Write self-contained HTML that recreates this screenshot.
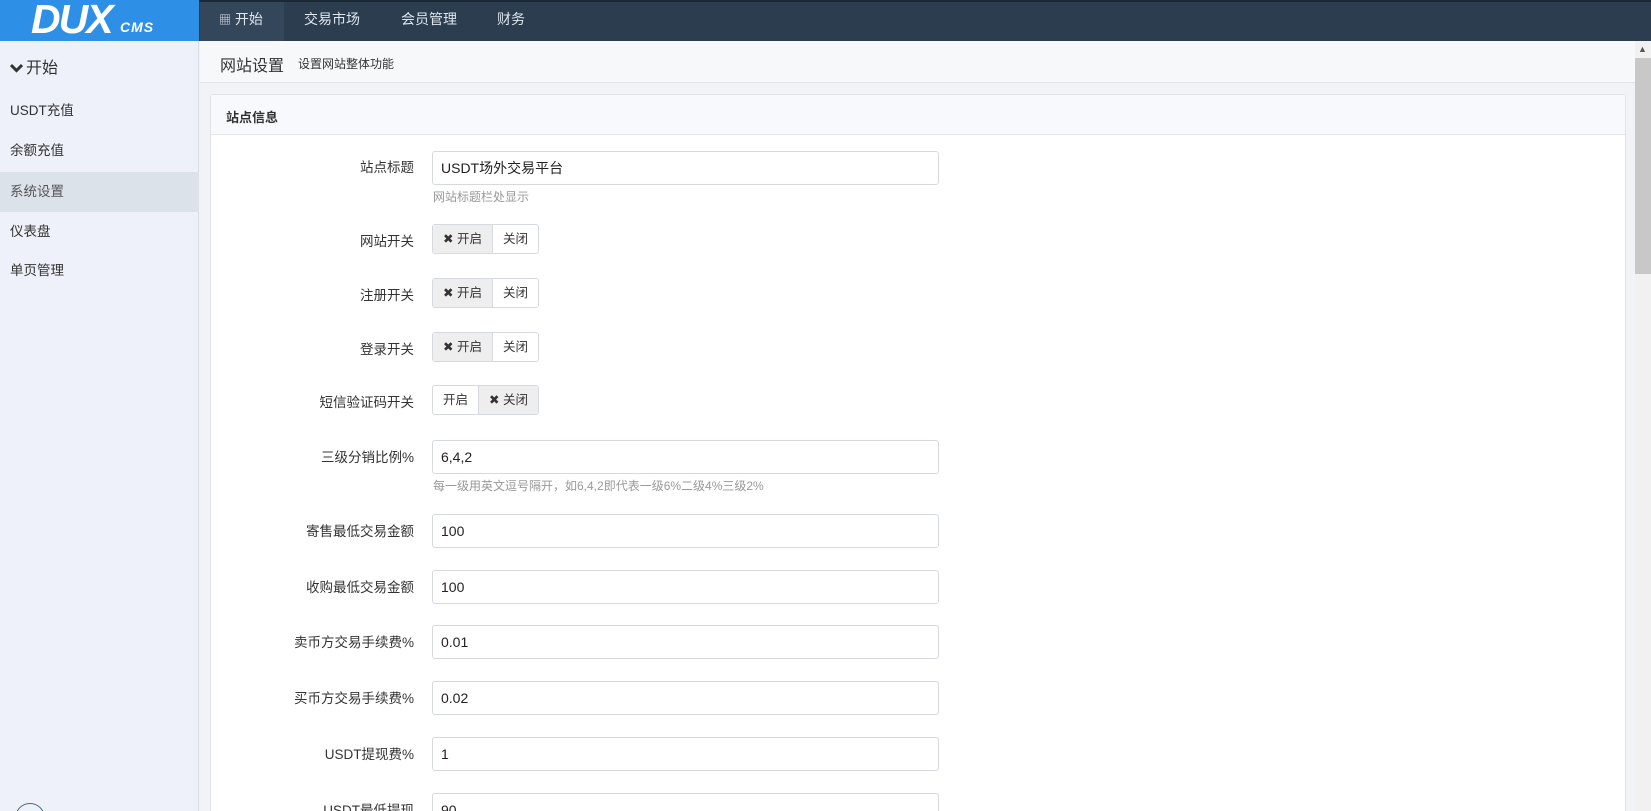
<!DOCTYPE html>
<html><head><meta charset="utf-8"><style>
*{margin:0;padding:0;box-sizing:border-box}
html,body{width:1651px;height:811px;overflow:hidden}
body{position:relative;background:#f1f3f6;font-family:"Liberation Sans","Noto Sans CJK SC",sans-serif;color:#333;font-size:13px}
.a{position:absolute}
.top{left:0;top:0;width:1651px;height:41px;background:#2c3d50;border-top:2px solid #1b2835}
.logo{left:0;top:0;width:199px;height:41px;background:#2e8fe6;overflow:hidden}
.nav{top:0;height:41px;line-height:39px;color:#dfe6ee;font-size:14px}
.side{left:0;top:41px;width:199px;height:770px;background:#eef1f9;border-right:1px solid #d8dce4;overflow:hidden}
.si{left:0;width:199px;height:40px;line-height:40px;padding-left:10px;font-size:13.5px;color:#333}
.ph{left:200px;top:41px;width:1435px;height:42px;background:#f7f8fa;border-bottom:1px solid #e2e5ea}
.card{left:210px;top:94px;width:1416px;height:740px;background:#fff;border:1px solid #dfe2e7;border-radius:3px}
.ch{left:0;top:0;width:100%;height:40px;background:#f8f9fc;border-bottom:1px solid #e3e6eb}
.lb{width:200px;text-align:right;left:214px;font-size:13.5px;color:#333}
.in{left:432px;width:507px;height:34px;border:1px solid #d6d9de;border-radius:3px;padding-left:8px;line-height:32px;font-size:14px;color:#222;background:#fff}
.hp{left:433px;font-size:12px;color:#999}
.bg{left:432px;height:30px;border:1px solid #d6d9de;border-radius:3px;display:flex;font-size:12.5px;background:#fff}
.bg span{display:block;line-height:28px;padding:0 10px}
.bg .on{background:#eeeeee}
</style></head><body>
<div class="a top"></div>
<div class="a logo"><span class="a" style="left:31px;top:-1px;line-height:40px;font:italic bold 41px/40px 'Liberation Sans',sans-serif;color:#fff;letter-spacing:-2px">DUX</span><span class="a" style="left:120px;top:20px;font:italic bold 14px/14px 'Liberation Sans',sans-serif;color:#fff;letter-spacing:1px">CMS</span></div>
<div class="a" style="left:200px;top:2px;width:84px;height:39px;background:#34465a"></div>
<div class="a nav" style="left:219px"><span style="font-size:12px">&#9638;</span> 开始</div>
<div class="a nav" style="left:304px">交易市场</div>
<div class="a nav" style="left:401px">会员管理</div>
<div class="a nav" style="left:497px">财务</div>
<div class="a side"><div class="a" style="left:15px;top:762px;width:30px;height:30px;border:1px solid #4a6a8a;border-radius:50%"></div></div>
<div class="a" style="left:10px;top:54px;font-size:16px;color:#333"><svg width="13" height="10" style="margin-right:3px"><path d="M1 2 L6.5 7.5 L12 2" stroke="#333" stroke-width="3" fill="none"/></svg>开始</div>
<div class="a si" style="top:91px">USDT充值</div>
<div class="a si" style="top:131px">余额充值</div>
<div class="a si" style="top:172px;background:#dce2ea;color:#555">系统设置</div>
<div class="a si" style="top:212px">仪表盘</div>
<div class="a si" style="top:251px">单页管理</div>
<div class="a ph"><span class="a" style="left:20px;top:11px;font-size:16px;color:#333">网站设置</span><span class="a" style="left:98px;top:14px;font-size:12px">设置网站整体功能</span></div>
<div class="a card"><div class="a ch"><b class="a" style="left:15px;top:12px;font-size:13px">站点信息</b></div></div>
<div class="a lb" style="top:156px">站点标题</div><div class="a in" style="top:151px">USDT场外交易平台</div><div class="a hp" style="top:188px">网站标题栏处显示</div>
<div class="a lb" style="top:230px">网站开关</div><div class="a bg" style="top:224px"><span class="on">✖ 开启</span><span style="border-left:1px solid #d6d9de">关闭</span></div>
<div class="a lb" style="top:284px">注册开关</div><div class="a bg" style="top:278px"><span class="on">✖ 开启</span><span style="border-left:1px solid #d6d9de">关闭</span></div>
<div class="a lb" style="top:338px">登录开关</div><div class="a bg" style="top:332px"><span class="on">✖ 开启</span><span style="border-left:1px solid #d6d9de">关闭</span></div>
<div class="a lb" style="top:391px">短信验证码开关</div><div class="a bg" style="top:385px"><span>开启</span><span class="on" style="border-left:1px solid #d6d9de">✖ 关闭</span></div>
<div class="a lb" style="top:446px">三级分销比例%</div><div class="a in" style="top:440px">6,4,2</div><div class="a hp" style="top:477px">每一级用英文逗号隔开，如6,4,2即代表一级6%二级4%三级2%</div>
<div class="a lb" style="top:520px">寄售最低交易金额</div><div class="a in" style="top:514px">100</div>
<div class="a lb" style="top:576px">收购最低交易金额</div><div class="a in" style="top:570px">100</div>
<div class="a lb" style="top:631px">卖币方交易手续费%</div><div class="a in" style="top:625px">0.01</div>
<div class="a lb" style="top:687px">买币方交易手续费%</div><div class="a in" style="top:681px">0.02</div>
<div class="a lb" style="top:743px">USDT提现费%</div><div class="a in" style="top:737px">1</div>
<div class="a lb" style="top:799px">USDT最低提现</div><div class="a in" style="top:793px">90</div>
<div class="a" style="left:1635px;top:41px;width:16px;height:770px;background:#f1f1f1"></div>
<div class="a" style="left:1635px;top:58px;width:16px;height:216px;background:#c8c8c8"></div>
<div class="a" style="left:1638px;top:44px;font-size:9px;color:#555">&#9650;</div>
</body></html>
